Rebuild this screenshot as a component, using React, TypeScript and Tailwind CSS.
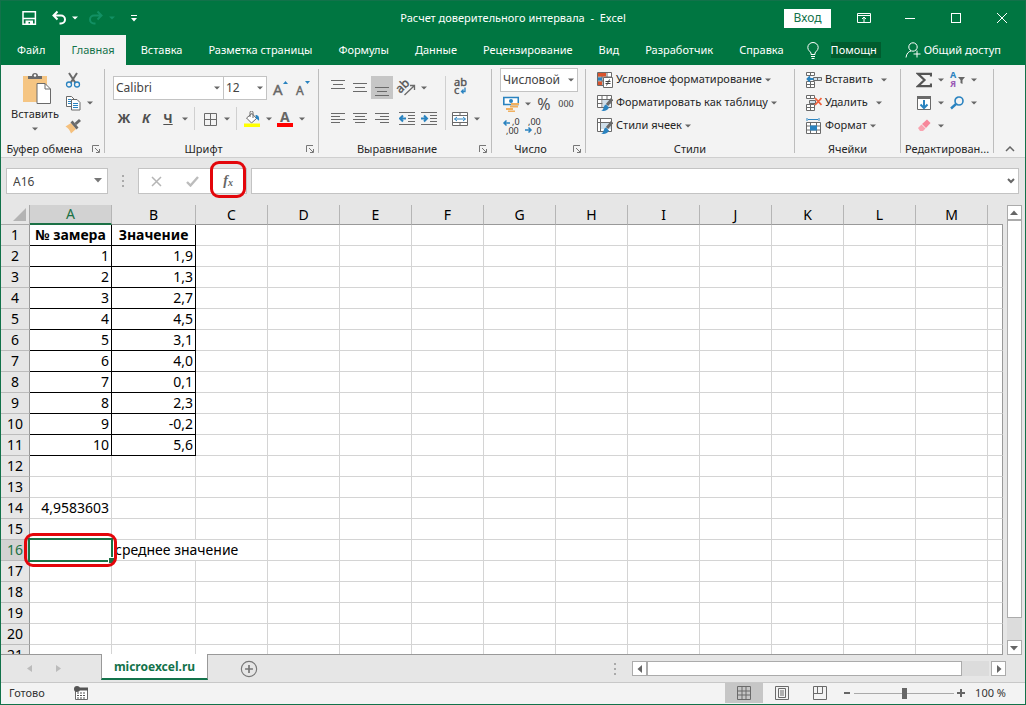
import type { ReactNode } from 'react'

const columns = ['A', 'B', 'C', 'D', 'E', 'F', 'G', 'H', 'I', 'J', 'K', 'L', 'M']
const rows = Array.from({ length: 21 }, (_, i) => i + 1)
const samples = ['1,9', '1,3', '2,7', '4,5', '3,1', '4,0', '0,1', '2,3', '-0,2', '5,6']
const menuTabs = [
  'Файл',
  'Главная',
  'Вставка',
  'Разметка страницы',
  'Формулы',
  'Данные',
  'Рецензирование',
  'Вид',
  'Разработчик',
  'Справка',
]

function Icon({ children, size = 16 }: { children: ReactNode; size?: number }) {
  return (
    <svg width={size} height={size} viewBox="0 0 16 16" fill="none" stroke="#6a6a6a" className="shrink-0">
      {children}
    </svg>
  )
}

function Caret() {
  return (
    <svg width="6" height="4" viewBox="0 0 6 4" className="shrink-0 fill-current">
      <path d="M0 0.5h6L3 3.5z" />
    </svg>
  )
}

function Tool({ label, active, children }: { label: string; active?: boolean; children: ReactNode }) {
  return (
    <button
      type="button"
      aria-label={label}
      className={`flex h-[23px] w-[22px] shrink-0 items-center justify-center ${active ? 'bg-[#c6c6c6]' : ''}`}
    >
      {children}
    </button>
  )
}

function Drop({ label }: { label: string }) {
  return (
    <button type="button" aria-label={label} className="flex h-[23px] w-[11px] shrink-0 items-center justify-center text-[#666]">
      <Caret />
    </button>
  )
}

function TextTool({ icon, label, gap }: { icon: ReactNode; label: string; gap?: boolean }) {
  return (
    <button type="button" className="flex h-[23px] items-center text-[11px] whitespace-nowrap">
      {icon}
      <span className="ml-[3px]">{label}</span>
      <span className={gap ? 'ml-2 text-[#666]' : 'ml-[3px] text-[#666]'}>
        <Caret />
      </span>
    </button>
  )
}

function Picker({ label, value, className }: { label: string; value: string; className: string }) {
  return (
    <div className={`relative h-6 shrink-0 text-xs text-[#444] ${className}`}>
      <select
        aria-label={label}
        defaultValue={value}
        className="h-full w-full appearance-none rounded-none border border-[#c3c3c3] bg-white pl-[2px] outline-none"
      >
        <option>{value}</option>
      </select>
      <span className="pointer-events-none absolute top-[10px] right-1 leading-none text-[#666]">
        <Caret />
      </span>
    </div>
  )
}

function Group({
  title,
  width,
  launcher,
  children,
}: {
  title: string
  width: string
  launcher?: boolean
  children: ReactNode
}) {
  return (
    <>
      <section className={`flex shrink-0 flex-col ${width}`}>
        <div className="h-[73px]">{children}</div>
        <div className="flex h-4 items-center">
          <h2 className="flex-1 text-center whitespace-nowrap">{title}</h2>
          {launcher && (
            <button type="button" aria-label={`${title}: параметры`} className="flex w-4 justify-center">
              <svg width="9" height="9" viewBox="0 0 9 9" fill="none" stroke="#777">
                <path d="M0.5 7V0.5H7M3 3l4 4M7.5 4v3.5H4" />
              </svg>
            </button>
          )}
        </div>
      </section>
      <div className="mt-px mb-1 w-px shrink-0 bg-[#bdbdbd]" />
    </>
  )
}

function LinesIcon({ d }: { d: string }) {
  return (
    <Icon>
      <path d={d} />
    </Icon>
  )
}

function TitleBar() {
  return (
    <header className="grid h-[34px] grid-cols-[1fr_auto_1fr] items-center">
      <div className="flex items-center pl-5">
        <button type="button" aria-label="Сохранить">
          <Icon>
            <path d="M2 1.800h12.400v12.400H2z" stroke="#fff" strokeWidth="1.500" />
            <path d="M2 8.500h12.400" stroke="#fff" strokeWidth="1.500" />
            <path d="M4.500 10.500h7.500v4H9v-2.500H7.500v2.500h-3z" fill="#fff" stroke="none" />
          </Icon>
        </button>
        <button type="button" aria-label="Отменить" className="ml-[14px] flex items-center gap-[5px] text-white">
          <Icon>
            <path d="M2.500 5.500H10a4 4 0 0 1 0 8H8.500M6.500 1.500l-4 4 4 4" stroke="#fff" strokeWidth="2" />
          </Icon>
          <Caret />
        </button>
        <button type="button" aria-label="Вернуть" className="ml-[10px] flex items-center gap-[5px] text-[#129064]">
          <Icon>
            <path d="M13.500 5.500H6a4 4 0 0 0 0 8h1.500M9.500 1.500l4 4-4 4" stroke="#129064" strokeWidth="2" />
          </Icon>
          <Caret />
        </button>
        <button type="button" aria-label="Панель быстрого доступа" className="ml-4">
          <svg width="6" height="7" viewBox="0 0 6 7" fill="#fff">
            <path d="M0 0h6v1H0zM0 3h6L3 6.500z" />
          </svg>
        </button>
      </div>
      <h1 className="whitespace-pre text-white">Расчет доверительного интервала  -  Excel</h1>
      <div className="flex items-center justify-end pr-[2px]">
        <button type="button" className="h-[19px] w-[47px] bg-white text-xs text-[#12724a]">
          Вход
        </button>
        <button type="button" aria-label="Параметры ленты" className="flex w-[66px] justify-center">
          <Icon>
            <path d="M1.500 3.500h13v9h-13zM1.500 5.500h13M8 12V7.500M6 9l2-2 2 2" stroke="#fff" />
          </Icon>
        </button>
        <button type="button" aria-label="Свернуть" className="flex w-[46px] items-center pl-2">
          <span className="h-px w-[10px] bg-white" />
        </button>
        <button type="button" aria-label="Развернуть" className="flex w-[46px] items-center pl-2">
          <span className="h-[10px] w-[10px] border border-white" />
        </button>
        <button type="button" aria-label="Закрыть" className="flex w-[34px] items-center pl-2">
          <svg width="10" height="10" viewBox="0 0 10 10" stroke="#fff">
            <path d="M0 0l10 10M10 0L0 10" />
          </svg>
        </button>
      </div>
    </header>
  )
}

function MenuBar() {
  return (
    <nav className="flex h-[30px] items-stretch gap-1 pl-[5px] text-white">
      {menuTabs.map(tab => (
        <button
          key={tab}
          type="button"
          className={`shrink-0 px-[11px] whitespace-nowrap ${tab === 'Главная' ? 'bg-[#f3f3f3] text-[#12724a]' : ''}`}
        >
          {tab}
        </button>
      ))}
      <label className="ml-2 flex shrink-0 items-center gap-3">
        <svg width="12" height="17" viewBox="0 0 12 17" fill="none" stroke="#fff">
          <path d="M4 12.500V11C3.500 9.500 0.800 8.500 0.800 5.500a5.200 5 0 0 1 10.400 0C11.200 8.500 8.500 9.500 8 11v1.500zM4 14.500h4M4.500 16.500h3" />
        </svg>
        <input
          aria-label="Помощник"
          defaultValue="Помощн"
          className="h-4 w-[50px] bg-[#005c2e] text-white outline-none"
        />
      </label>
      <button type="button" className="mr-6 ml-auto flex shrink-0 items-center gap-[3px] whitespace-nowrap">
        <Icon>
          <circle cx="8" cy="5" r="4.200" stroke="#fff" />
          <path d="M1 15.500C1.500 11.500 3.500 9.500 6 9M12 8.500v7M8.500 12h7" stroke="#fff" />
        </Icon>
        Общий доступ
      </button>
    </nav>
  )
}

function ClipboardGroup() {
  return (
    <Group title="Буфер обмена" width="w-[103px]" launcher>
      <div className="flex pt-1 pl-[9px]">
        <button type="button" className="flex w-[50px] flex-col items-center">
          <svg width="30" height="32" viewBox="0 0 30 32" className="ml-1">
            <path d="M1 4h24v26H1z" fill="#f5c583" />
            <path d="M6 7V4h4a3 3 0 0 1 6 0h4v3z" fill="#6a6a6a" />
            <circle cx="13" cy="3.500" r="1.200" fill="#fff" />
            <path d="M15 11.500h8l5.500 5.500v14.500H15z" fill="#fff" stroke="#6a6a6a" />
            <path d="M23 11.500V17h5.500" fill="none" stroke="#6a6a6a" />
          </svg>
          <span className="mt-[2px] leading-4">Вставить</span>
          <span className="mt-[5px] text-[#666]">
            <Caret />
          </span>
        </button>
        <div className="-mt-1 ml-[2px]">
          <Tool label="Вырезать">
            <Icon>
              <path d="M4 1l6.500 10M12 1L5.500 11" strokeWidth="2" />
              <circle cx="4" cy="12.500" r="2.500" stroke="#2a83c0" strokeWidth="1.300" />
              <circle cx="12" cy="12.500" r="2.500" stroke="#2a83c0" strokeWidth="1.300" />
            </Icon>
          </Tool>
          <div className="flex">
            <Tool label="Копировать">
              <Icon>
                <path d="M1.500 1.500h5l3 3v7h-8z" fill="#fff" />
                <path d="M3 4.500h3M3 6.500h3M3 8.500h3" stroke="#2a83c0" />
                <path d="M6.500 4.500h5.500l3 3v7.500H6.500z" fill="#fff" />
                <path d="M8 8.500h5M8 10.500h5M8 12.500h5" stroke="#2a83c0" />
              </Icon>
            </Tool>
            <Drop label="Варианты копирования" />
          </div>
          <Tool label="Формат по образцу">
            <Icon>
              <path d="M0.500 8.500L6 5l5 6-5 4.500C5 12 3 10 0.500 8.500z" fill="#f5c07d" stroke="none" />
              <path d="M5.500 4.500l2-2 6 7-2 2z" fill="#6a6a6a" stroke="none" />
              <path d="M10.500 6l4.500-4" strokeWidth="3" />
            </Icon>
          </Tool>
        </div>
      </div>
    </Group>
  )
}

function FontGroup() {
  return (
    <Group title="Шрифт" width="w-[213px]" launcher>
      <div className="flex flex-col gap-[7px] pt-2 pl-2">
        <div className="flex">
          <Picker label="Шрифт" value="Calibri" className="w-[111px]" />
          <Picker label="Размер" value="12" className="-ml-px w-[44px]" />
          <div className="ml-[3px] flex">
            <Tool label="Увеличить размер шрифта">
              <svg width="16" height="18" viewBox="0 0 16 18" className="overflow-visible">
                <text x="0" y="16" fontSize="15" fill="#666" stroke="#666" strokeWidth="0.400">A</text>
                <path d="M10 5h5l-2.500-3z" fill="#2a83c0" />
              </svg>
            </Tool>
            <Tool label="Уменьшить размер шрифта">
              <svg width="16" height="18" viewBox="0 0 16 18" className="overflow-visible">
                <text x="1" y="16" fontSize="12" fill="#666" stroke="#666" strokeWidth="0.400">A</text>
                <path d="M10 2h5l-2.500 3z" fill="#2a83c0" />
              </svg>
            </Tool>
          </div>
        </div>
        <div className="flex text-[13px] font-bold text-[#505050]">
          <Tool label="Полужирный">Ж</Tool>
          <Tool label="Курсив">
            <i>К</i>
          </Tool>
          <Tool label="Подчеркнутый">
            <u>Ч</u>
          </Tool>
          <Drop label="Виды подчеркивания" />
          <div className="mx-1 w-px bg-[#d0d0d0]" />
          <Tool label="Границы">
            <Icon>
              <path d="M2.500 2.500h12v12h-12zM8.500 2.500v12M2.500 8.500h12" />
            </Icon>
          </Tool>
          <Drop label="Виды границ" />
          <div className="mx-1 w-px bg-[#d0d0d0]" />
          <Tool label="Цвет заливки">
            <Icon>
              <path d="M2.500 7L8 2.500l4.500 5L7.500 12z" fill="#fff" />
              <path d="M6 6V1.500a1.500 1.500 0 0 1 3 0V7" />
              <path d="M11.500 4c3 0 4 2 3.500 6-1-1.500-2-2-3-2z" fill="#2a83c0" stroke="none" />
              <path d="M0 12.500h16V16H0z" fill="#ff0" stroke="none" />
            </Icon>
          </Tool>
          <Drop label="Варианты заливки" />
          <Tool label="Цвет текста">
            <svg width="16" height="17" viewBox="0 0 16 17" className="overflow-visible">
              <text x="3" y="12" fontSize="14" fill="#666">A</text>
              <path d="M0 13h16v4H0z" fill="#f00" />
            </svg>
          </Tool>
          <Drop label="Варианты цвета текста" />
        </div>
      </div>
    </Group>
  )
}

function AlignGroup() {
  return (
    <Group title="Выравнивание" width="w-[172px]" launcher>
      <div className="flex pt-2 pl-2">
        <div className="flex w-[118px] flex-col gap-2">
          <div className="flex">
            <Tool label="По верхнему краю">
              <LinesIcon d="M1 0.500h14M3 4.500h10M1 8.500h14" />
            </Tool>
            <Tool label="По середине">
              <LinesIcon d="M1 3.500h14M3 7.500h10M1 11.500h14" />
            </Tool>
            <Tool label="По нижнему краю" active>
              <LinesIcon d="M1 7.500h14M3 11.500h10M1 15.500h14" />
            </Tool>
            <div className="ml-[3px] flex">
              <Tool label="Ориентация">
                <svg width="18" height="18" viewBox="0 0 18 18" fill="none" stroke="#6a6a6a" className="overflow-visible">
                  <text x="-1" y="11" fontSize="12" fill="#555" stroke="#555" strokeWidth="0.400" transform="rotate(-45 5 9)">
                    ab
                  </text>
                  <path d="M6.500 16L16 7M12 6.500h4.500V11" strokeWidth="1.300" />
                </svg>
              </Tool>
              <Drop label="Варианты ориентации" />
            </div>
          </div>
          <div className="flex">
            <Tool label="По левому краю">
              <LinesIcon d="M1 2.500h14M1 5.500h9M1 8.500h14M1 11.500h9" />
            </Tool>
            <Tool label="По центру">
              <LinesIcon d="M1 2.500h14M3 5.500h10M1 8.500h14M3 11.500h10" />
            </Tool>
            <Tool label="По правому краю">
              <LinesIcon d="M1 2.500h14M6 5.500h9M1 8.500h14M6 11.500h9" />
            </Tool>
            <div className="ml-[3px] flex">
              <Tool label="Уменьшить отступ">
                <Icon>
                  <path d="M0 1.500h16M9 4.500h7M9 7.500h7M9 10.500h7M0 13.500h16" />
                  <path d="M7 7.500H1.500M4 4.500l-3 3 3 3" stroke="#2a83c0" strokeWidth="2" />
                </Icon>
              </Tool>
              <Tool label="Увеличить отступ">
                <Icon>
                  <path d="M0 1.500h16M9 4.500h7M9 7.500h7M9 10.500h7M0 13.500h16" />
                  <path d="M0 7.500h5.500M3 4.500l3 3-3 3" stroke="#2a83c0" strokeWidth="2" />
                </Icon>
              </Tool>
            </div>
          </div>
        </div>
        <div className="w-px bg-[#d0d0d0]" />
        <div className="ml-[3px] flex flex-col gap-2">
          <Tool label="Переносить текст">
            <svg
              width="16"
              height="18"
              viewBox="0 0 16 18"
              fontSize="11"
              fill="#555"
              stroke="#555"
              strokeWidth="0.400"
              className="overflow-visible"
            >
              <text x="2" y="7">ab</text>
              <text x="2" y="15">c</text>
              <path d="M13 8.500v4H9.500M11.500 10.500l-2 2 2 2" fill="none" stroke="#2a83c0" strokeWidth="1.300" />
            </svg>
          </Tool>
          <div className="flex">
            <Tool label="Объединить и поместить в центре">
              <Icon>
                <path d="M0.500 1.500h15v13h-15zM0.500 4.500h15M0.500 11.500h15M8 1.500v3M8 11.500v3" fill="#fff" />
                <path d="M2.500 8h11M5 6L2.500 8 5 10M11 6l2.500 2-2.500 2" stroke="#2a83c0" />
              </Icon>
            </Tool>
            <Drop label="Варианты объединения" />
          </div>
        </div>
      </div>
    </Group>
  )
}

function NumberGroup() {
  return (
    <Group title="Число" width="w-[93px]" launcher>
      <div className="flex flex-col pl-2">
        <Picker label="Числовой формат" value="Числовой" className="w-[78px]" />
        <div className="flex text-[#505050]">
          <Tool label="Финансовый формат">
            <Icon>
              <path d="M0.800 1.500h14.500v7H0.800z" stroke="#2a83c0" strokeWidth="1.600" fill="#fff" />
              <circle cx="8" cy="5" r="2" fill="#2a83c0" stroke="none" />
              <path d="M8 8h8M7 10.500h8M3 13h7M5 15.500h7" stroke="#f0b060" strokeWidth="2" />
            </Icon>
          </Tool>
          <Drop label="Варианты финансового формата" />
          <Tool label="Процентный формат">
            <span className="text-base">%</span>
          </Tool>
          <Tool label="Формат с разделителями">
            <span className="text-[9px] font-medium">000</span>
          </Tool>
        </div>
        <div className="flex">
          <Tool label="Увеличить разрядность">
            <svg width="16" height="16" viewBox="0 0 16 16" fontSize="9" fill="#333" className="overflow-visible">
              <text x="9" y="6">,0</text>
              <text x="3" y="15">,00</text>
              <path d="M7 4H1M3.500 1.500L1 4l2.500 2.500" fill="none" stroke="#2a83c0" strokeWidth="1.500" />
            </svg>
          </Tool>
          <Tool label="Уменьшить разрядность">
            <svg width="16" height="16" viewBox="0 0 16 16" fontSize="9" fill="#333" className="overflow-visible">
              <text x="3" y="6">,00</text>
              <text x="9" y="15">,0</text>
              <path d="M0 11h6M3.500 8.500L6 11l-2.500 2.500" fill="none" stroke="#2a83c0" strokeWidth="1.500" />
            </svg>
          </Tool>
        </div>
      </div>
    </Group>
  )
}

function StylesGroup() {
  return (
    <Group title="Стили" width="w-[208px]">
      <div className="flex flex-col items-start pl-[11px]">
        <TextTool
          label="Условное форматирование"
          icon={
            <Icon>
              <path d="M0.500 0.500h14v13H0.500zM5 0.500v13M10 0.500v13M0.500 5h14M0.500 9h14" fill="#fff" />
              <path d="M1 1h8v3.500H1zM1 9.500h4V13H1z" fill="#d9532c" stroke="none" />
              <path d="M1 5.500h4v3H1z" fill="#2a83c0" stroke="none" />
              <path d="M6.500 5.500h9v10h-9z" fill="#fff" />
              <path d="M8.500 9.500h5M8.500 11.500h5M12.500 7.500l-3 6" stroke="#444" />
            </Icon>
          }
        />
        <TextTool
          label="Форматировать как таблицу"
          icon={
            <Icon>
              <path d="M0.500 0.500h14v12H0.500zM5 0.500v12M10 0.500v12M0.500 4.500h14M0.500 8.500h14" fill="#fff" />
              <path d="M5.500 5h8v7h-8z" fill="#cfdfea" stroke="none" />
              <path d="M15 4l-5 6" strokeWidth="3" />
              <path d="M4 15.500c3 0 2-5 5-6l3 3c-1 3-5 4-8 3z" fill="#2a83c0" stroke="none" />
            </Icon>
          }
        />
        <TextTool
          label="Стили ячеек"
          icon={
            <Icon>
              <path d="M0.500 0.500h14v13H0.500zM3.500 0.500v13M0.500 4.500h14" fill="#fff" />
              <path d="M4 5h10v6H4z" fill="#cfdfea" stroke="none" />
              <path d="M15 4l-5 6" strokeWidth="3" />
              <path d="M4 15.500c3 0 2-5 5-6l3 3c-1 3-5 4-8 3z" fill="#2a83c0" stroke="none" />
            </Icon>
          }
        />
      </div>
    </Group>
  )
}

function CellsGroup() {
  return (
    <Group title="Ячейки" width="w-[105px]">
      <div className="flex flex-col items-start pl-[11px]">
        <TextTool
          label="Вставить"
          gap
          icon={
            <Icon>
              <path d="M0.500 0.500h8v3h-8zM4.500 0.500v3M0.500 9.500h8v6h-8zM4.500 9.500v6M0.500 12.500h8" fill="#fff" />
              <path d="M7.500 5.500h8v3h-8zM11.500 5.500v3" fill="#cfdfea" />
              <path d="M7.500 7H1.500M4 4.500L1.500 7 4 9.500" stroke="#2a83c0" strokeWidth="1.800" />
            </Icon>
          }
        />
        <TextTool
          label="Удалить"
          gap
          icon={
            <Icon>
              <path d="M0.500 0.500h8v3h-8zM4.500 0.500v3M0.500 9.500h8v6h-8zM4.500 9.500v6M0.500 12.500h8" fill="#fff" />
              <path d="M3.500 5.500h6v3h-6z" fill="#cfdfea" />
              <path d="M9 3l6.500 7M15.500 3L9 10" stroke="#f0603c" strokeWidth="1.800" />
            </Icon>
          }
        />
        <TextTool
          label="Формат"
          icon={
            <Icon>
              <path d="M1 0v3M13 0v3M2 1.500h10" stroke="#2a83c0" />
              <path d="M0.500 4.500h14v11h-14zM0.500 8h14M0.500 12h14M4.500 4.500v11M10.500 4.500v11" fill="#fff" />
              <path d="M4 7.500h7v5H4z" fill="#2a83c0" stroke="none" />
            </Icon>
          }
        />
      </div>
    </Group>
  )
}

function EditGroup() {
  return (
    <Group title="Редактирован..." width="w-[92px]">
      <div className="pl-3">
        <div className="flex">
          <Tool label="Автосумма">
            <Icon>
              <path d="M15 4.500V1.800H2L8.500 8 2 14.200h13V11.500" strokeWidth="2.200" stroke="#555" />
            </Icon>
          </Tool>
          <Drop label="Варианты суммы" />
          <Tool label="Сортировка и фильтр">
            <svg width="18" height="18" viewBox="0 0 18 18" fontSize="9" fontWeight="bold" className="overflow-visible">
              <text x="2" y="7" fill="#2a83c0">А</text>
              <text x="2" y="16" fill="#9b59b6">Я</text>
              <path d="M10 6h7l-2.500 3v4l-2-1V9z" fill="#666" />
            </svg>
          </Tool>
          <Drop label="Варианты сортировки" />
        </div>
        <div className="flex">
          <Tool label="Заполнить">
            <Icon>
              <path d="M1.500 1.500h13v13h-13z" fill="#fff" />
              <path d="M1 1h14v3H1z" fill="#6a6a6a" stroke="none" />
              <path d="M8 5v8M4.500 9.500L8 13l3.500-3.500" stroke="#2a83c0" strokeWidth="2" />
            </Icon>
          </Tool>
          <Drop label="Варианты заполнения" />
          <Tool label="Найти и выделить">
            <Icon>
              <circle cx="10" cy="6" r="4" stroke="#2a83c0" strokeWidth="1.600" />
              <path d="M7 9l-5 4.500" stroke="#2a83c0" strokeWidth="2.400" />
            </Icon>
          </Tool>
          <Drop label="Варианты поиска" />
        </div>
        <div className="flex">
          <Tool label="Очистить">
            <Icon>
              <path d="M6 6l5-4.500L14.500 5l-4.500 5z" fill="#f7879a" stroke="none" />
              <path d="M5.500 6.500l4 4L7 13H4L2 10z" fill="#f9a3b0" stroke="none" />
            </Icon>
          </Tool>
          <Drop label="Варианты очистки" />
        </div>
      </div>
    </Group>
  )
}

function FormulaBar() {
  return (
    <div className="flex h-12 shrink-0 items-center border-t border-[#cfcfcf] pt-[10px] pr-[6px] pb-[11px] pl-[5px] text-xs">
      <div className="relative h-[26px] w-[102px]">
        <input
          aria-label="Имя ячейки"
          defaultValue="A16"
          className="h-full w-full border border-[#c3c3c3] bg-white pl-[6px] text-[#444] outline-none"
        />
        <svg width="8" height="5" viewBox="0 0 8 5" className="absolute top-[10px] right-[6px]" fill="#777">
          <path d="M0 0h8L4 4.500z" />
        </svg>
      </div>
      <div className="mx-[14px] flex flex-col gap-[3px]">
        <span className="h-[2px] w-[2px] bg-[#aaa]" />
        <span className="h-[2px] w-[2px] bg-[#aaa]" />
        <span className="h-[2px] w-[2px] bg-[#aaa]" />
      </div>
      <div className="flex h-[26px] w-[109px] items-stretch border border-[#c3c3c3] bg-white">
        <button type="button" aria-label="Отмена" className="flex flex-1 items-center justify-center">
          <svg width="11" height="11" viewBox="0 0 11 11" stroke="#b5b5b5" strokeWidth="1.500">
            <path d="M1 1l9 9M10 1l-9 9" />
          </svg>
        </button>
        <button type="button" aria-label="Ввод" className="flex flex-1 items-center justify-center">
          <svg width="13" height="11" viewBox="0 0 13 11" fill="none" stroke="#bcbcbc" strokeWidth="2.400">
            <path d="M1 6l3.500 3.500L12 1" />
          </svg>
        </button>
        <button
          type="button"
          aria-label="Вставить функцию"
          className="relative flex flex-1 items-center justify-center font-['Liberation_Serif',serif] font-bold text-[#666] italic"
        >
          <span className="text-sm leading-none">f</span>
          <span className="mt-1 text-[10px] leading-none">x</span>
          <span className="pointer-events-none absolute inset-x-0 -top-2 -bottom-[5px] rounded-[9px] border-[3px] border-[#e3060b]" />
        </button>
      </div>
      <div className="relative ml-1 h-[26px] flex-1">
        <input aria-label="Строка формул" className="h-full w-full border border-[#c3c3c3] bg-white px-2 outline-none" />
        <svg
          width="8"
          height="6"
          viewBox="0 0 8 6"
          className="absolute top-[10px] right-1"
          fill="none"
          stroke="#666"
          strokeWidth="2"
        >
          <path d="M1 1l3 3 3-3" />
        </svg>
      </div>
    </div>
  )
}

function DataCells({ row }: { row: number }) {
  const boxed = 'border-r border-b border-black'
  const plain = 'border-r border-b border-[#d4d4d4]'

  if (row === 1) {
    return (
      <>
        <td className={`${boxed} text-center font-bold whitespace-nowrap`}>№ замера</td>
        <td className={`${boxed} text-center font-bold`}>Значение</td>
        <td className={plain} />
      </>
    )
  }
  if (row <= 11) {
    return (
      <>
        <td className={`${boxed} pr-[2px] text-right`}>{row - 1}</td>
        <td className={`${boxed} pr-[2px] text-right`}>{samples[row - 2]}</td>
        <td className={plain} />
      </>
    )
  }
  if (row === 16) {
    return (
      <>
        <td className={`${plain} relative`}>
          <div className="absolute -inset-x-[2px] -inset-y-[2px] z-10 border-2 border-[#1b7145] bg-white">
            <span className="absolute -right-[3px] -bottom-[3px] h-[6px] w-[6px] border-t border-l border-white bg-[#1b7145]" />
          </div>
          <div className="absolute -inset-x-[6px] -inset-y-[7px] z-20 rounded-[9px] border-[3px] border-[#e3060b]" />
        </td>
        <td colSpan={2} className={`${plain} pl-[3px] whitespace-nowrap`}>
          среднее значение
        </td>
      </>
    )
  }
  return (
    <>
      <td className={`${plain} pr-[2px] text-right`}>{row === 14 ? '4,9583603' : ''}</td>
      <td className={plain} />
      <td className={plain} />
    </>
  )
}

function Sheet() {
  return (
    <div className="min-h-0 flex-1 overflow-hidden border-b border-[#999]">
      <table className="w-full table-fixed border-separate border-spacing-0 text-sm leading-5 text-black">
        <colgroup>
          <col className="w-[29px]" />
          <col className="w-[82px]" />
          <col className="w-[84px]" />
          {columns.slice(2).map(name => (
            <col key={name} className="w-[72px]" />
          ))}
          <col />
        </colgroup>
        <thead>
          <tr className="h-5">
            <th className="border-r border-b border-[#ababab]">
              <svg width="13" height="13" viewBox="0 0 13 13" className="ml-3" fill="#b4b4b4">
                <path d="M13 0v13H0z" />
              </svg>
            </th>
            {columns.map(name => (
              <th
                key={name}
                scope="col"
                className={`border-r border-r-[#b5b5b5] font-normal ${
                  name === 'A'
                    ? 'border-b-2 border-b-[#1b7145] bg-[#d2d2d2] leading-[18px] text-[#1b7145]'
                    : 'border-b border-b-[#999] leading-[19px]'
                }`}
              >
                {name}
              </th>
            ))}
            <th className="border-b border-[#999]" />
          </tr>
        </thead>
        <tbody className="bg-white">
          {rows.map(row => (
            <tr key={row} className="h-[21px]">
              <th
                scope="row"
                className={`border-r border-b border-r-[#999] border-b-[#bcbcbc] text-center font-normal ${
                  row === 16 ? 'bg-[#d2d2d2] text-[#1b7145]' : 'bg-[#e6e6e6]'
                }`}
              >
                {row}
              </th>
              <DataCells row={row} />
              {columns.slice(3).map(name => (
                <td key={name} className="border-r border-b border-[#d4d4d4]" />
              ))}
              <td className="border-r border-b border-r-[#999] border-b-[#d4d4d4]" />
            </tr>
          ))}
        </tbody>
      </table>
    </div>
  )
}

function ScrollButton({ label, d }: { label: string; d: string }) {
  return (
    <button
      type="button"
      aria-label={label}
      className="flex h-[15px] w-[15px] shrink-0 items-center justify-center border border-[#ababab] bg-white"
    >
      <svg width="8" height="8" viewBox="0 0 8 8" fill="#666">
        <path d={d} />
      </svg>
    </button>
  )
}

function SheetBar() {
  return (
    <div className="flex h-[27px] shrink-0 items-start">
      <button type="button" aria-label="Предыдущий лист" className="ml-[26px] self-center">
        <svg width="5" height="7" viewBox="0 0 5 7" fill="#bbb">
          <path d="M5 0v7L0 3.500z" />
        </svg>
      </button>
      <button type="button" aria-label="Следующий лист" className="ml-6 self-center">
        <svg width="5" height="7" viewBox="0 0 5 7" fill="#bbb">
          <path d="M0 0v7l5-3.500z" />
        </svg>
      </button>
      <button
        type="button"
        className="-mt-px ml-10 h-[26px] w-[107px] border-x border-b-2 border-x-[#999] border-b-[#12724a] bg-white pt-[2px] text-xs font-bold text-[#12724a]"
      >
        microexcel.ru
      </button>
      <button type="button" aria-label="Новый лист" className="ml-8 self-center">
        <Icon size={18}>
          <circle cx="8" cy="8" r="6.800" stroke="#777" />
          <path d="M8 4.500v7M4.500 8h7" stroke="#777" strokeWidth="1.500" />
        </Icon>
      </button>
      <div className="ml-auto flex items-center self-center">
        <div className="mr-4 flex flex-col gap-[3px]">
          <span className="h-[2px] w-[2px] bg-[#aaa]" />
          <span className="h-[2px] w-[2px] bg-[#aaa]" />
          <span className="h-[2px] w-[2px] bg-[#aaa]" />
        </div>
        <ScrollButton label="Прокрутить влево" d="M6 0v8L1.500 4z" />
        <div className="h-[15px] w-[315px] border border-[#ababab] bg-white" />
        <div className="mr-[2px] h-[15px] w-[27px] bg-[#dcdcdc]" />
        <ScrollButton label="Прокрутить вправо" d="M2 0v8l4.500-4z" />
        <div className="w-[19px]" />
      </div>
    </div>
  )
}

function StatusBar() {
  return (
    <footer className="flex h-[22px] shrink-0 items-center border-t border-[#c8c8c8] bg-[#f3f3f3] pr-[19px] pb-px pl-2 text-[#333]">
      <span>Готово</span>
      <button type="button" aria-label="Запись макроса" className="ml-7">
        <Icon>
          <path d="M2.500 4.500h12v10h-12z" fill="#fff" />
          <path d="M6 2.500h9v3H6z" fill="#555" stroke="none" />
          <path d="M4 8h9M4 10.500h9M4 13h9" strokeDasharray="2 1" stroke="#555" />
          <circle cx="4" cy="4" r="3" fill="#555" stroke="none" />
        </Icon>
      </button>
      <div className="ml-auto flex h-full items-center">
        <button type="button" aria-label="Обычный" className="flex h-full w-[38px] items-center justify-center bg-[#c6c6c6]">
          <Icon>
            <path d="M1.500 1.500h13v13h-13zM6 1.500v13M10 1.500v13M1.500 6h13M1.500 10h13" />
          </Icon>
        </button>
        <button type="button" aria-label="Разметка страницы" className="flex h-full w-[38px] items-center justify-center">
          <Icon>
            <path d="M1.500 1.500h13v13h-13zM4.500 3.500h7v9h-7zM6 6h4M6 8h4M6 10h4" />
          </Icon>
        </button>
        <button type="button" aria-label="Страничный режим" className="flex h-full w-[38px] items-center justify-center">
          <Icon>
            <path d="M1.500 1.500h13v13h-13zM5.500 1.500v7M10.500 1.500v7M1.500 8.500h9" />
          </Icon>
        </button>
        <button type="button" aria-label="Уменьшить масштаб" className="ml-[5px] flex h-full w-[10px] items-center">
          <span className="h-[2px] w-[6px] bg-[#666]" />
        </button>
        <input
          type="range"
          aria-label="Масштаб"
          defaultValue={50}
          className="h-3 w-[100px] appearance-none bg-transparent [&::-webkit-slider-runnable-track]:h-px [&::-webkit-slider-runnable-track]:bg-[#aaa] [&::-webkit-slider-thumb]:-mt-[5px] [&::-webkit-slider-thumb]:h-[11px] [&::-webkit-slider-thumb]:w-[5px] [&::-webkit-slider-thumb]:appearance-none [&::-webkit-slider-thumb]:bg-[#666]"
        />
        <button type="button" aria-label="Увеличить масштаб" className="ml-[3px]">
          <svg width="8" height="8" viewBox="0 0 8 8" stroke="#666" strokeWidth="2">
            <path d="M4 0v8M0 4h8" />
          </svg>
        </button>
        <span className="ml-[10px]">100 %</span>
      </div>
    </footer>
  )
}

export default function App() {
  return (
    <div className="flex h-screen flex-col overflow-hidden border border-[#12724a] bg-[#e6e6e6] font-['Noto_Sans',sans-serif] text-[11px] text-[#262626]">
      <div className="shrink-0 bg-[#007641]">
        <TitleBar />
        <MenuBar />
      </div>

      {/* Ribbon */}
      <div className="flex h-[92px] shrink-0 bg-[#f3f3f3] pt-[3px]">
        <ClipboardGroup />
        <FontGroup />
        <AlignGroup />
        <NumberGroup />
        <StylesGroup />
        <CellsGroup />
        <EditGroup />
        <button type="button" aria-label="Свернуть ленту" className="mr-[10px] mb-[5px] ml-auto self-end">
          <svg width="10" height="6" viewBox="0 0 10 6" fill="none" stroke="#666" strokeWidth="1.500">
            <path d="M1 5l4-4 4 4" />
          </svg>
        </button>
      </div>

      <FormulaBar />

      <div className="flex min-h-0 flex-1">
        <Sheet />
        <div className="flex w-[22px] shrink-0 flex-col items-center">
          <ScrollButton label="Прокрутить вверх" d="M0 6h8L4 1.500z" />
          <div className="w-[15px] flex-1 border border-[#ababab] bg-white" />
          <div className="h-[22px] w-[15px] bg-[#dcdcdc]" />
          <ScrollButton label="Прокрутить вниз" d="M0 2h8L4 6.500z" />
        </div>
      </div>

      <SheetBar />
      <StatusBar />
    </div>
  )
}
